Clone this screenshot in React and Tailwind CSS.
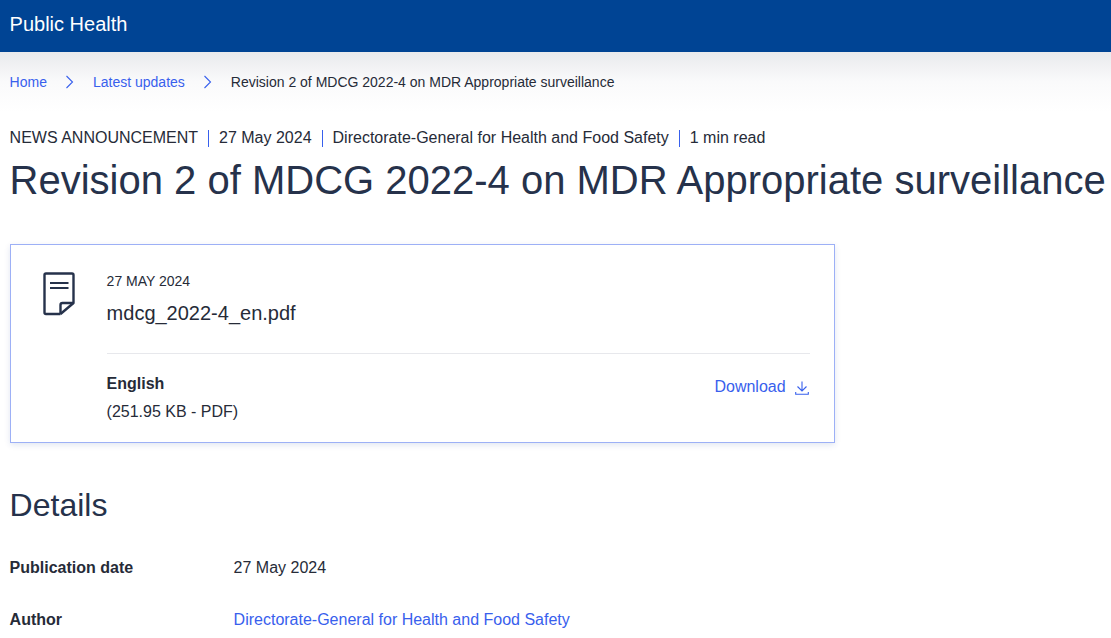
function Chevron() {
  return (
    <svg width="16" height="16" viewBox="0 0 16 16" fill="none" stroke="#3860ed" strokeWidth="1.1" className="mx-[15px] shrink-0">
      <path d="M4.5 2 L10.5 8 L4.5 14" />
    </svg>
  );
}

function Dot() {
  return <span className="mx-[10px] h-[17px] w-px bg-[#3860ed]" />;
}

export default function App() {
  return (
    <div className="h-[638px] overflow-hidden bg-white text-[#262b38] font-['Liberation_Sans',Arial,sans-serif]">
      {/* Site header */}
      <header className="flex h-[52px] items-center bg-[#004494] px-[9.6px] pb-[5px]">
        <span className="text-[20px] leading-6 text-white">Public Health</span>
      </header>

      {/* Breadcrumb */}
      <nav className="flex h-[60px] items-center bg-gradient-to-b from-[#e9eaed] via-[#fafafb] to-white px-[9.6px] text-[14px]">
        <a className="text-[#3860ed]">Home</a>
        <Chevron />
        <a className="text-[#3860ed]">Latest updates</a>
        <Chevron />
        <span>Revision 2 of MDCG 2022-4 on MDR Appropriate surveillance</span>
      </nav>

      <main className="px-[9.6px]">
        {/* Meta line */}
        <div className="mt-[16px] flex h-5 items-center text-[16px]">
          <span>NEWS ANNOUNCEMENT</span>
          <Dot />
          <span>27 May 2024</span>
          <Dot />
          <span>Directorate-General for Health and Food Safety</span>
          <Dot />
          <span>1 min read</span>
        </div>
        <h1 className="mt-[8px] whitespace-nowrap text-[40px] leading-[48px] font-normal text-[#26324b]">
          Revision 2 of MDCG 2022-4 on MDR Appropriate surveillance
        </h1>

        {/* File card */}
        <section className="mt-[40px] h-[199px] w-[825px] border border-[#9db0f6] px-[24px] pt-[24px] shadow-[0_2px_6px_rgba(9,49,142,0.12)]">
          <div className="flex">
            <div className="w-[72px] shrink-0">
              <svg width="48" height="48" viewBox="0 0 48 48" fill="none" stroke="#26324b" strokeWidth="2.4" className="mt-[1px]">
                <path d="M25.5 44 H11 a1.5 1.5 0 0 1 -1.5 -1.5 V5 a1.5 1.5 0 0 1 1.5 -1.5 H37 a1.5 1.5 0 0 1 1.5 1.5 V33 L25.5 44" strokeLinejoin="round" />
                <path d="M25.5 44 V35 a2 2 0 0 1 2 -2 H38.5" />
                <path d="M15 13 H33.5 M15 18 H33.5" strokeWidth="1.8" />
              </svg>
            </div>
            <div className="flex-1">
              <div className="pt-[2px] text-[14px] leading-5">27 MAY 2024</div>
              <div className="mt-[10px] text-[20px] leading-6">mdcg_2022-4_en.pdf</div>
            </div>
          </div>
          <div className="ml-[72px] mt-[28px] border-t border-[#e7e8ec] pt-[20px]">
            <div className="flex justify-between">
              <div className="text-[16px] leading-6">
                <div className="font-bold leading-[19px]">English</div>
                <div className="mt-[7px]">(251.95 KB - PDF)</div>
              </div>
              <a className="mr-[1px] mt-[1px] flex h-6 items-center text-[16px] text-[#3860ed]">
                Download
                <svg width="14" height="14" viewBox="0 0 14 14" fill="none" stroke="#3860ed" strokeWidth="1.1" className="ml-[9px] mt-[1px]">
                  <path d="M7 0.5 V9.5 M2.5 5.5 L7 10 L11.5 5.5 M0.7 11 V13.3 H13.3 V11" />
                </svg>
              </a>
            </div>
          </div>
        </section>

        <h2 className="mt-[42px] text-[32px] leading-[40px] font-normal text-[#26324b]">Details</h2>

        {/* Details */}
        <dl className="mt-[31px] grid grid-cols-[224px_1fr] gap-y-[28px] text-[16px] leading-6">
          <dt className="font-bold">Publication date</dt>
          <dd>27 May 2024</dd>
          <dt className="font-bold">Author</dt>
          <dd className="text-[#3860ed]">Directorate-General for Health and Food Safety</dd>
        </dl>
      </main>
    </div>
  );
}
